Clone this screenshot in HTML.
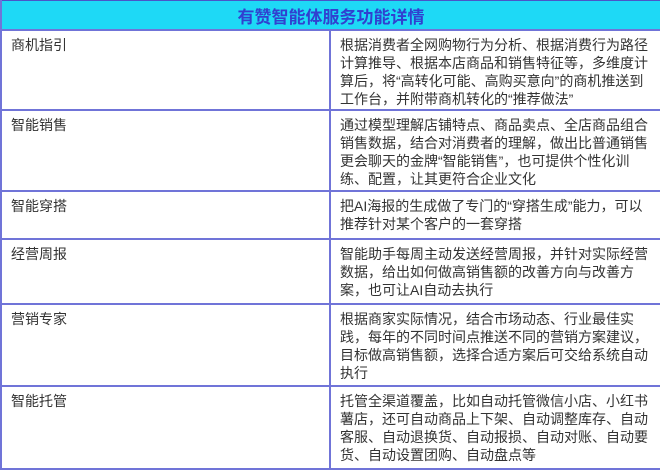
<!DOCTYPE html>
<html><head><meta charset="utf-8"><style>
html,body{margin:0;padding:0;background:#fff;}
body{width:660px;height:470px;overflow:hidden;font-family:"Liberation Sans","Noto Sans CJK SC",sans-serif;color:#333;}
table{position:absolute;left:0;top:0;width:660px;border-collapse:collapse;table-layout:fixed;}
td{border:2px solid #7074d8;vertical-align:top;font-size:14px;line-height:18px;padding:5px 8px 0 9px;}
td.r{padding-left:9px;padding-right:8px;}
th{background:#1ed9f6;color:#3140d0;font-size:17px;font-weight:bold;height:28px;padding:0;border:2px solid #7074d8;border-top:1px solid #4a55c8;}
</style></head><body>
<table>
<colgroup><col style="width:329px"><col style="width:331px"></colgroup>
<tr><th colspan="2">有赞智能体服务功能详情</th></tr>
<tr style="height:80px"><td>商机指引</td><td class="r">根据消费者全网购物行为分析、根据消费行为路径计算推导、根据本店商品和销售特征等，多维度计算后，将“高转化可能、高购买意向”的商机推送到工作台，并附带商机转化的“推荐做法”</td></tr>
<tr style="height:81px"><td>智能销售</td><td class="r">通过模型理解店铺特点、商品卖点、全店商品组合销售数据，结合对消费者的理解，做出比普通销售更会聊天的金牌“智能销售”，也可提供个性化训练、配置，让其更符合企业文化</td></tr>
<tr style="height:48px"><td>智能穿搭</td><td class="r">把AI海报的生成做了专门的“穿搭生成”能力，可以推荐针对某个客户的一套穿搭</td></tr>
<tr style="height:65px"><td>经营周报</td><td class="r">智能助手每周主动发送经营周报，并针对实际经营数据，给出如何做高销售额的改善方向与改善方案，也可让AI自动去执行</td></tr>
<tr style="height:82px"><td>营销专家</td><td class="r">根据商家实际情况，结合市场动态、行业最佳实践，每年的不同时间点推送不同的营销方案建议，目标做高销售额，选择合适方案后可交给系统自动执行</td></tr>
<tr style="height:83px"><td>智能托管</td><td class="r">托管全渠道覆盖，比如自动托管微信小店、小红书薯店，还可自动商品上下架、自动调整库存、自动客服、自动退换货、自动报损、自动对账、自动要货、自动设置团购、自动盘点等</td></tr>
</table>
</body></html>
